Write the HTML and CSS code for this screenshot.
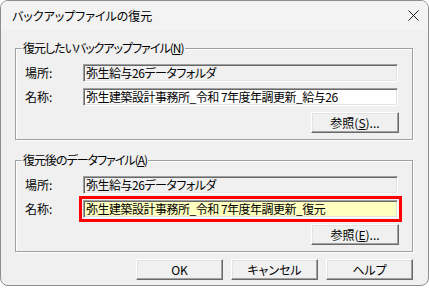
FILE: index.html
```html
<!DOCTYPE html>
<html lang="ja">
<head>
  <meta charset="UTF-8" />
  <title>バックアップファイルの復元</title>
  <link rel="stylesheet" href="styles.css">
</head>
<body>

<div class="dialog">
  <div class="titlebar">
    <span class="title">バックアップファイルの復元</span>
    <svg class="close" width="11" height="11" viewBox="0 0 11 11">
      <path d="M0.5 0.5L10.5 10.5M10.5 0.5L0.5 10.5" stroke="#1a1a1a" stroke-width="1" fill="none"/>
    </svg>
  </div>

  <div class="content">
    <fieldset class="group">
      <legend>復元したいバックアップファイル(<u>N</u>)</legend>
      <div class="row">
        <label>場所:</label>
        <div class="field readonly">弥生給与26データフォルダ</div>
      </div>
      <div class="row">
        <label>名称:</label>
        <div class="field">弥生建築設計事務所_令和 7年度年調更新_給与26</div>
      </div>
      <button class="btn browse">参照(<u>S</u>)...</button>
    </fieldset>

    <fieldset class="group second">
      <legend>復元後のデータファイル(<u>A</u>)</legend>
      <div class="row">
        <label>場所:</label>
        <div class="field readonly">弥生給与26データフォルダ</div>
      </div>
      <div class="row">
        <label>名称:</label>
        <div class="field highlight">弥生建築設計事務所_令和 7年度年調更新_復元</div>
      </div>
      <button class="btn browse">参照(<u>E</u>)...</button>
    </fieldset>

    <div class="actions">
      <button class="btn">OK</button>
      <button class="btn">キャンセル</button>
      <button class="btn">ヘルプ</button>
    </div>
  </div>
</div>

</body>
</html>
```

FILE: styles.css
```css
body {
  margin: 0;
  background: #fff;
  font-family: "Noto Sans CJK JP", "Noto Sans", sans-serif;
  font-size: 12px;
  font-feature-settings: "palt";
  color: #000;
}
.dialog {
  width: 429px;
  height: 286px;
  box-sizing: border-box;
  border: 1px solid #8e8e8e;
  border-radius: 8px;
  background: #f0f0f0;
  overflow: hidden;
}
.titlebar {
  height: 29px;
  display: flex;
  align-items: center;
  justify-content: space-between;
  padding: 0 9px 0 11px;
  background: #f3f3f3;
}
.title {
  line-height: 14px;
}
.content {
  padding: 11px 15px 0 14px;
}
.group {
  margin: 0;
  padding: 9px 13px 6px 9px;
  border: 1px solid #a0a0a0;
  box-shadow: 1px 1px 0 #fff, inset 1px 1px 0 #fff;
  display: flex;
  flex-direction: column;
  gap: 6px;
}
.group.second {
  margin-top: 13px;
}
legend {
  margin-left: -3px;
  padding: 0 1px;
  line-height: 14px;
  letter-spacing: -1px;
  background: #f0f0f0;
}
.row {
  display: flex;
  align-items: center;
  height: 18px;
}
label {
  width: 58px;
  line-height: 14px;
}
.field {
  width: 315px;
  height: 18px;
  box-sizing: border-box;
  padding: 0 2px;
  line-height: 16px;
  letter-spacing: -0.5px;
  white-space: nowrap;
  background: #fff;
  border: 1px solid;
  border-color: #a0a0a0 #fff #fff #a0a0a0;
  box-shadow: inset 1px 1px 0 #696969, inset -1px -1px 0 #e3e3e3;
}
.field.readonly {
  background: #f0f0f0;
}
.field.highlight {
  background: #ffffc0;
  outline: 3px solid #f00;
  outline-offset: 1px;
}
.btn {
  width: 87px;
  height: 21px;
  padding: 0;
  font: inherit;
  line-height: 14px;
  color: #000;
  background: #f0f0f0;
  border: 1px solid;
  border-color: #fff #696969 #696969 #fff;
  box-shadow: inset -1px -1px 0 #a0a0a0, inset 1px 1px 0 #e3e3e3;
}
.browse {
  width: 88px;
  align-self: flex-end;
}
.actions {
  display: flex;
  justify-content: flex-end;
  gap: 8px;
  margin-top: 7px;
}
```
